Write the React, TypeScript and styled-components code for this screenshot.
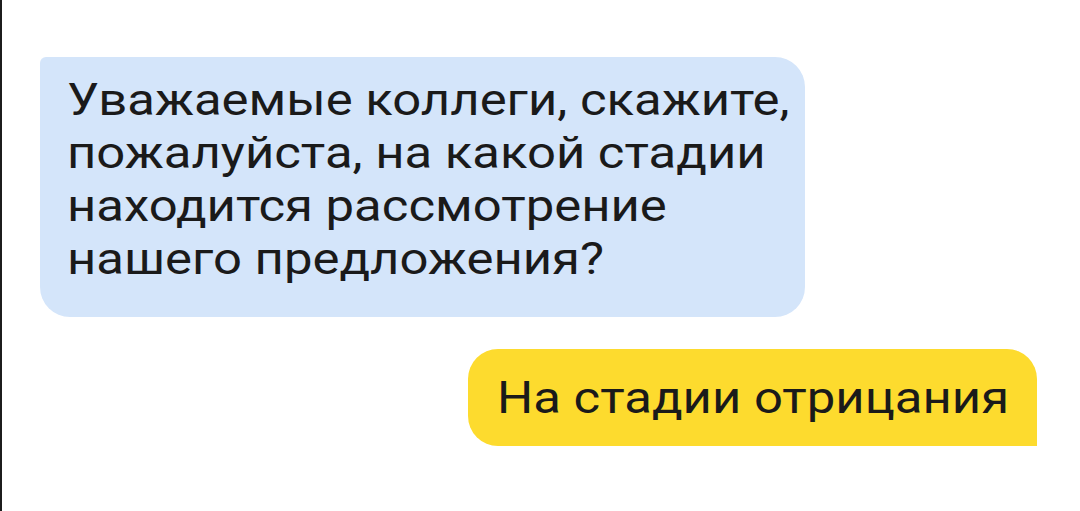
import React from "react";
import styled, { createGlobalStyle } from "styled-components";

const GlobalStyle = createGlobalStyle`
  html, body {
    margin: 0;
    padding: 0;
    background: #ffffff;
  }
  body {
    font-family: Roboto, "Noto Sans", "Liberation Sans", sans-serif;
  }
`;

const Screen = styled.div`
  box-sizing: border-box;
  height: 511px;
  border-left: 2px solid #1c1c1c;
  background: #ffffff;
  display: flex;
  flex-direction: column;
  padding: 57px 43px 0 38px;
  gap: 32px;
  overflow: hidden;
`;

const Bubble = styled.div<{ $mine?: boolean; $width: number }>`
  box-sizing: border-box;
  width: ${(p) => p.$width}px;
  align-self: ${(p) => (p.$mine ? "flex-end" : "flex-start")};
  background: ${(p) => (p.$mine ? "#fddb2e" : "#d4e5fa")};
  border-radius: ${(p) => (p.$mine ? "30px 30px 0 30px" : "6px 30px 30px 30px")};
  padding: ${(p) => (p.$mine ? "22px 0 22px 29px" : "16px 0 32px 27px")};
  color: #1a1a1a;
  font-size: 45px;
  line-height: 53px;
`;

// the chat font is drawn a little wide, so the line is stretched sideways
const Text = styled.div`
  white-space: nowrap;
  transform: scaleX(1.13);
  transform-origin: left top;
`;

const App = () => {
  return (
    <>
      <GlobalStyle />
      <Screen>
        <Bubble $width={765}>
          <Text>
            Уважаемые коллеги, скажите,
            <br />
            пожалуйста, на какой стадии
            <br />
            находится рассмотрение
            <br />
            нашего предложения?
          </Text>
        </Bubble>
        <Bubble $mine $width={569}>
          <Text>На стадии отрицания</Text>
        </Bubble>
      </Screen>
    </>
  );
};

export default App;
